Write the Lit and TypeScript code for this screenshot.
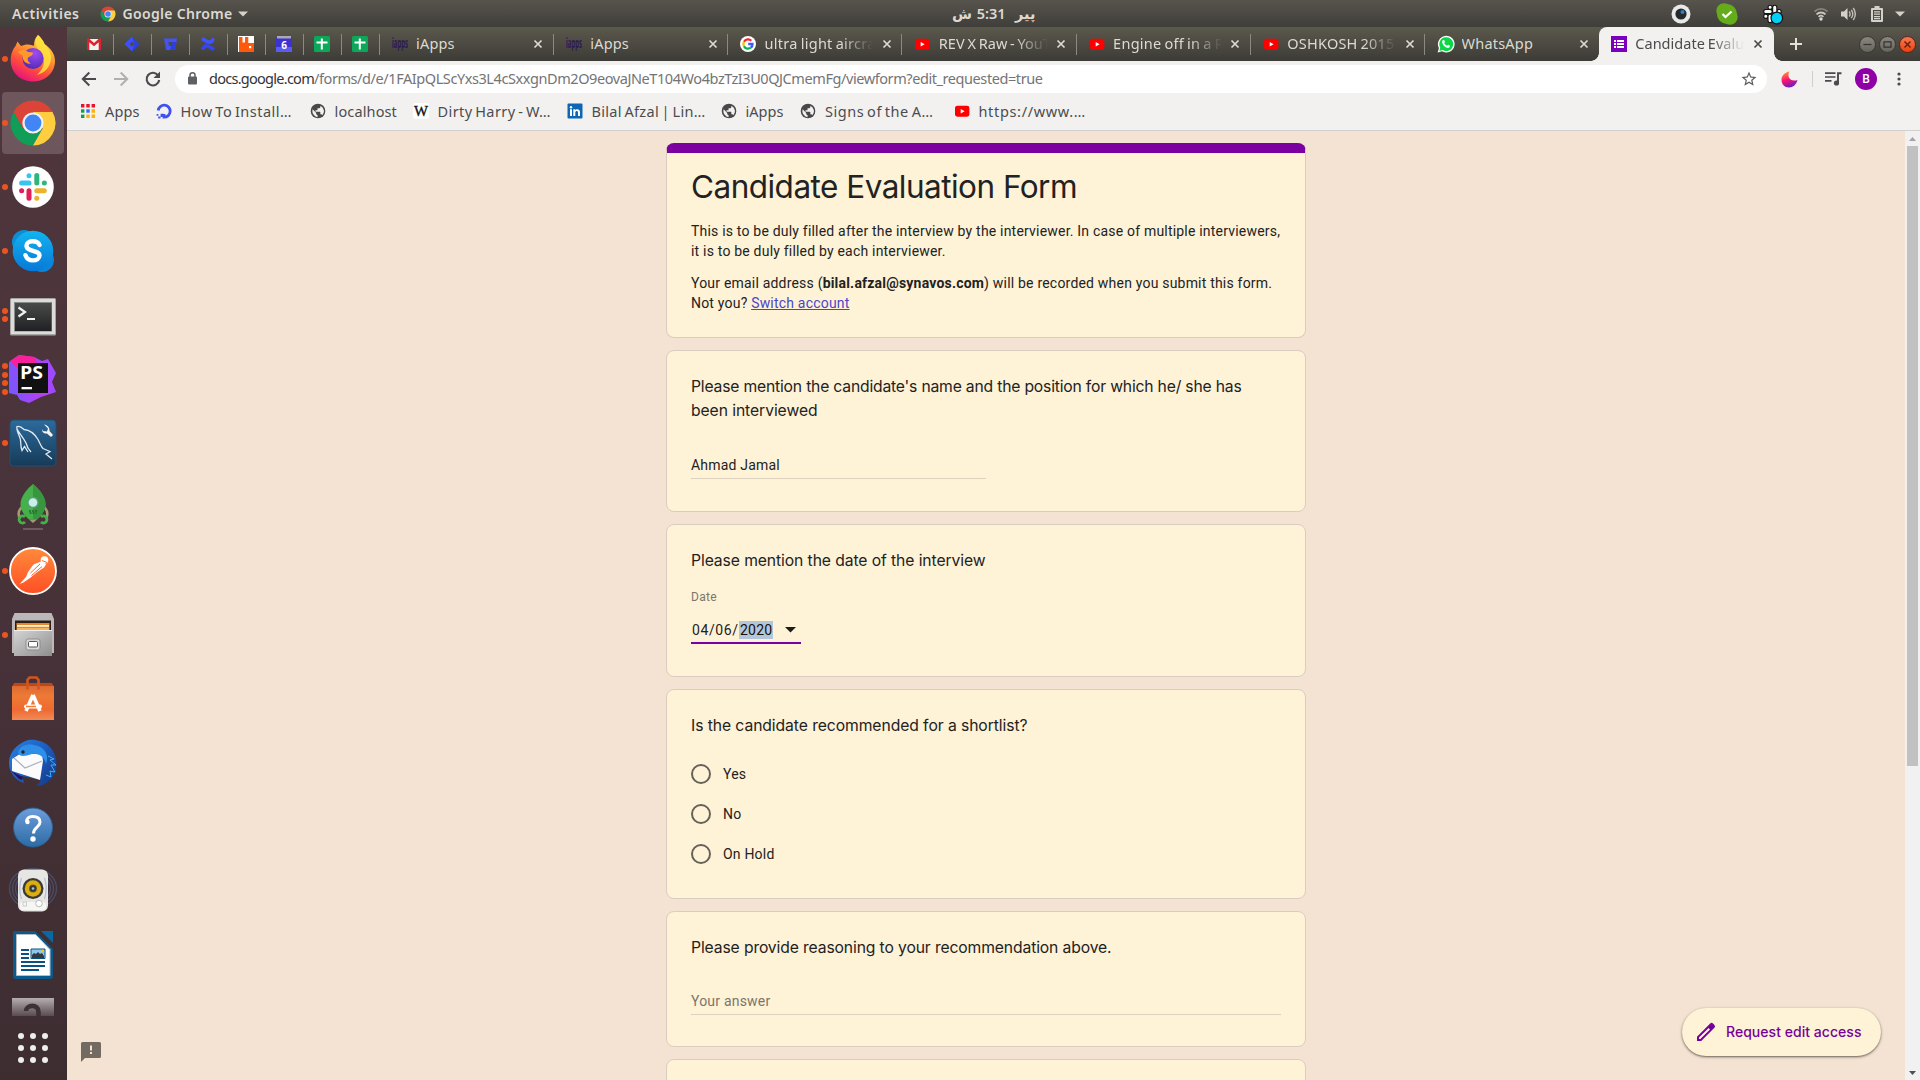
import { LitElement, html, svg, css, TemplateResult } from "lit";
import { customElement, property } from "lit/decorators.js";

/** A single line of text spread over a fixed advance width. */
@customElement("fit-text")
export class FitText extends LitElement {
  @property() text = "";
  @property({ type: Number }) w = 0;
  static styles = css`
    :host { display: block; white-space: pre; flex: none; }
    span { display: inline-block; }
  `;
  updated() {
    const el = this.renderRoot.querySelector("span") as HTMLElement;
    el.style.letterSpacing = "0px";
    const natural = el.getBoundingClientRect().width;
    const n = [...this.text].length;
    if (this.w > 0 && n > 0) el.style.letterSpacing = `${(this.w - natural) / n}px`;
  }
  render() {
    return html`<span>${this.text}</span>`;
  }
}

const fit = (text: string, w: number) => html`<fit-text .text=${text} .w=${w}></fit-text>`;
const icon = (size: number, vb: string, body: TemplateResult, h = size) =>
  html`<svg width=${size} height=${h} viewBox=${vb}>${body}</svg>`;

/* ---------- small icons ---------- */
const chromeArt = svg`
  <path d="M4.600 12.800A22.400 22.400 0 0 0 24 46.400L33.700 29.600 14.300 29.600Z" fill="#0f9d58"/>
  <path d="M43.400 12.800A22.400 22.400 0 0 1 24 46.400L33.700 29.600 24 12.800Z" fill="#ffcd40"/>
  <path d="M4.600 12.800A22.400 22.400 0 0 1 43.400 12.800H24L14.300 29.600Z" fill="#db4437"/>
  <circle cx="24" cy="24" r="10.600" fill="#f1f1f1"/><circle cx="24" cy="24" r="8.400" fill="#4285f4"/>`;
const close = html`<svg class="close" width="10" height="10" viewBox="0 0 10 10"><path d="M1.500 1.500 8.500 8.500M8.500 1.500 1.500 8.500" stroke="currentColor" stroke-width="1.700"/></svg>`;
const gmail = icon(16, "0 0 16 16", svg`<path d="M1 3h14v11H1z" fill="#f2f2f2"/><path d="M1 2.600h2L8 7l5-4.400h2V14h-2.300V6.200L8 10.200 3.300 6.200V14H1z" fill="#e0202c"/>`);
const jira = icon(16, "0 0 16 16", svg`<path d="M8 .5 15.500 8 8 15.500.5 8z" fill="#3c50ff"/><path d="M8 .5 15.500 8 8 15.500 10.500 8z" fill="#2733cc" opacity=".6"/><path d="M8 5.500 10.500 8 8 10.500 5.500 8z" fill="#4c4b43"/>`);
const bitbucket = icon(16, "0 0 16 16", svg`<path d="M2 2.500h13l-1.900 11.500H4.100z" fill="#4254f5"/><path d="M6.300 6h4.200L9.900 10H7z" fill="#4c4b43"/><path d="M10.500 6h3.900l-1.300 8H8z" fill="#2836d6" opacity=".7"/>`);
const confluence = icon(16, "0 0 16 16", svg`<path d="M1 4 3 1c3 1.500 4 3 6 3.200 1.500.1 2.500-1.300 3.500-2.700L15 3.200C13.500 6.500 12 8 9.500 8 6 8 4 5.500 1 4z" fill="#4254f5"/><path d="M15 12 13 15c-3-1.500-4-3-6-3.200-1.500-.1-2.500 1.300-3.500 2.700L1 12.800C2.500 9.500 4 8 6.500 8 10 8 12 10.500 15 12z" fill="#3446f2"/>`);
const rabbit = icon(16, "0 0 16 16", svg`<path d="M0 0h16v16H0z" fill="#fff"/><path d="M1 1h3.500v5.500H7V1h3.300v6H16v9H1z" fill="#ff5a0c"/><path d="M11 10h2.200v2.200H11z" fill="#fff"/>`);
const cal = icon(16, "0 0 16 16", svg`<path d="M0 1h16v15H0z" fill="#3d31d0"/><path d="M0 11h16v5H0z" fill="#5a5cf2"/><path d="M1 0h14v2.500H1z" fill="#a9a8b4"/><text x="8" y="13" text-anchor="middle" font-size="10" font-weight="700" font-family="Noto Sans,sans-serif" fill="#fff">6</text>`);
const sheets = icon(16, "0 0 16 16", svg`<rect width="16" height="16" rx="1.500" fill="#0aa858"/><path d="M6.800 2.500h2V13.500h-2zM2.500 5.500h11v2h-11z" fill="#fff"/>`);
const iapps = html`<svg width="16" height="16" viewBox="0 0 16 16"><text x="0" y="11.500" textLength="16" lengthAdjust="spacingAndGlyphs" font-size="14" font-weight="700" font-family="Noto Sans,sans-serif" fill="#2b1a55">iapps</text></svg>`;
const google = icon(16, "0 0 16 16", svg`<circle cx="8" cy="8" r="8" fill="#fff"/><g fill="none" stroke-width="2.300"><path d="M11.300 4.800A4.600 4.600 0 0 0 4 5.800" stroke="#ff1f2d"/><path d="M4 5.800a4.600 4.600 0 0 0 0 4.400" stroke="#ffbb00"/><path d="M4 10.200a4.600 4.600 0 0 0 6.800 1.500" stroke="#00b84a"/><path d="M10.800 11.700A4.400 4.400 0 0 0 12.500 8H8.200" stroke="#3b5bff"/></g>`);
const youtube = icon(16, "0 0 16 16", svg`<rect x="1" y="2.700" width="14.400" height="11" rx="2.400" fill="#f00"/><path d="M6.700 6 10.600 8.200 6.700 10.400z" fill="#fff"/>`);
const whatsapp = icon(18, "0 0 16 16", svg`<path d="M.6 15.600 1.700 11.600A7.400 7.400 0 1 1 4.500 14.500z" fill="#fff"/><path d="M2 14.200 2.900 11.300A6.200 6.200 0 1 1 5 13.400z" fill="#0bd648"/><path d="M5.300 4.500 6.400 4.400 7.100 6.200 6.400 7.100C7 8.300 7.800 9 9 9.500L9.800 8.700 11.500 9.600C11.500 11 10.500 11.600 9.600 11.500 7 11.100 4.900 8.900 4.600 6.700 4.500 5.800 4.800 5 5.300 4.500z" fill="#fff"/>`);
const forms = icon(16, "0 0 16 16", svg`<rect width="16" height="16" fill="#7a00bd"/><path d="M3 4h2v2H3zM3 7h2v2H3zM3 10h2v2H3zM6 4h7v2H6zM6 7h7v2H6zM6 10h7v2H6z" fill="#fff"/>`);
const apps = icon(14, "0 0 14 14", svg`<path d="M0 0h3.400v3.400H0zM5.300 0h3.400v3.400H5.300zM10.600 0H14v3.400h-3.400z" fill="#e8132b"/><path d="M0 5.300h3.400v3.400H0z" fill="#0aa050"/><path d="M5.300 5.300h3.400v3.400H5.300z" fill="#3b69f5"/><path d="M10.600 5.300H14v3.400h-3.400zM5.300 10.600h3.400V14H5.300zM10.600 10.600H14V14h-3.400z" fill="#fbb20a"/><path d="M0 10.600h3.400V14H0z" fill="#0aa050"/>`);
const ocean = icon(16, "0 0 16 16", svg`<path d="M2.200 7.500A6 6 0 1 1 8 14.200V11" fill="none" stroke="#3f51f5" stroke-width="2.800"/><path d="M4.600 10.800h3V14h-3zM2.200 13.500h2.300v2H2.200zM.6 11h1.800v1.800H.6z" fill="#3f51f5"/>`);
const globe = icon(16, "0 0 24 24", svg`<circle cx="12" cy="12" r="11" fill="#48484a"/><path d="M4 9.500 9.300 15v1.200A2 2 0 0 0 11.300 18v3.300A9.300 9.300 0 0 1 4 9.500zM18.500 18.300A2 2 0 0 0 16.500 17h-1v-3a1 1 0 0 0-1-1H8.300v-2h2a1 1 0 0 0 1-1V8h2.200a2 2 0 0 0 2-2V4a9 9 0 0 1 3 14.300z" fill="#f2f1f0"/>`);
const wiki = icon(16, "0 0 16 16", svg`<rect width="16" height="16" rx="3" fill="#fff"/><text x="1" y="12.800" font-size="14" font-weight="400" font-family="Liberation Serif,serif" textLength="14" lengthAdjust="spacingAndGlyphs" fill="#111" stroke="#111" stroke-width=".35">W</text>`);
const linkedin = icon(16, "0 0 16 16", svg`<rect x=".5" y=".5" width="15" height="15" rx="1" fill="#0b66b5"/><path d="M3 6.300h2V13H3zM6.300 6.300h2v1c1-1.700 4.700-1.600 4.700 1.700v4h-2V9.600c0-2.300-2.700-2-2.700 0V13h-2z" fill="#fff"/><circle cx="4" cy="4.200" r="1.200" fill="#fff"/>`);

/* ---------- dock icons ---------- */
const dockChrome = icon(48, "0 0 48 48", chromeArt);
const firefox = icon(48, "0 0 48 48", svg`
  <defs><linearGradient id="fa" x1=".8" y1="0" x2=".3" y2="1"><stop offset="0" stop-color="#fff44f"/><stop offset=".35" stop-color="#ffa02e"/><stop offset=".7" stop-color="#ff4a3e"/><stop offset="1" stop-color="#e5107f"/></linearGradient>
  <radialGradient id="fb" cx=".6" cy=".25" r=".8"><stop offset="0" stop-color="#a24bf5"/><stop offset="1" stop-color="#4b2cb0"/></radialGradient></defs>
  <path d="M29 0c3 3 5 5 6.500 9C41 13 46 18 46 26 46 38 36 46.500 24 46.500 11 46.500 1.700 37 1.700 25.500 1.700 19 4 14 6.500 11l2-4.500L12 11l5-1.500c4-.5 6 1 8 1C25 6 26 3 29 0z" fill="url(#fa)"/>
  <path d="M29 0c3 3 5 5 6.500 9 4 4 7 9 6.500 15C41 33 35 38 28 40 38 31 36 19 31 16 26 12 25 6 29 0z" fill="#ffe340" opacity=".85"/>
  <circle cx="24" cy="23.500" r="10.500" fill="url(#fb)"/>
  <path d="M9 17c4-3 8-2 10 0l5 .5c0 3-3 4-5 5-1 3 1 5 3 6-6 1-9-4-8-8-2-1-4-2-5-3.500z" fill="#ff9a26"/>`);
const slackMarks = svg`<g fill="none" stroke-width="5" stroke-linecap="round">
  <path d="M20 12.700v.1" stroke="#36c5f0"/><path d="M12.600 20H20" stroke="#36c5f0"/>
  <path d="M27.800 12.600V20" stroke="#2eb67d"/><path d="M35.300 20h.1" stroke="#2eb67d"/>
  <path d="M27.800 27.700h7.500" stroke="#ecb22e"/><path d="M27.800 35.200v.1" stroke="#ecb22e"/>
  <path d="M20 27.700v7.500" stroke="#e01e5a"/><path d="M12.600 27.700h.1" stroke="#e01e5a"/></g>`;
const slack = icon(48, "0 0 48 48", svg`<circle cx="24" cy="24" r="20.800" fill="#fff"/>${slackMarks}`);
const skype = icon(48, "0 0 48 48", svg`<defs><linearGradient id="sk" x2="0" y2="1"><stop offset="0" stop-color="#12b4f0"/><stop offset="1" stop-color="#0878d8"/></linearGradient></defs>
  <circle cx="15" cy="15" r="12" fill="#0a8fd6"/><circle cx="33" cy="33" r="12" fill="#0b84dc"/><circle cx="24" cy="24" r="20.300" fill="url(#sk)"/>
  <path d="M30.500 18C29 14.500 25.500 14.300 23.500 14.300c-4 0-6 2-6 4.500 0 6.500 13 3.500 13 9.800 0 3-3 4.800-6.500 4.800-4 0-6.300-1.700-7.500-5.200" fill="none" stroke="#fff" stroke-width="4.400" stroke-linecap="round"/>`);
const terminal = icon(48, "0 0 48 48", svg`<defs><linearGradient id="tm" x2="0" y2="1"><stop offset="0" stop-color="#4a4a4a"/><stop offset="1" stop-color="#1f2122"/></linearGradient></defs>
  <rect x="1" y="7" width="46" height="37.500" rx="1.500" fill="#a5a5a3"/><rect x="2" y="8" width="44" height="35" fill="#dcdcda"/><rect x="5" y="11" width="38" height="29.500" fill="#8a8a88"/><rect x="6" y="12" width="36.500" height="28" fill="url(#tm)"/>
  <path d="M9.500 16.500 16 21 9.500 25.500" fill="none" stroke="#f0f0f0" stroke-width="2.200"/><path d="M18 28h8" stroke="#f0f0f0" stroke-width="2"/>`);
const phpstorm = icon(48, "0 0 48 48", svg`<defs><linearGradient id="ps" x1="0" x2="1" y1=".6" y2=".4"><stop offset="0" stop-color="#7a56ff"/><stop offset=".6" stop-color="#b340f5"/><stop offset="1" stop-color="#9a4bff"/></linearGradient></defs>
  <path d="M0 7 10 0l15 2 8 4 6-2 8 14-4 9 4 10-15 5-12 6-9-3-3-5-8-2z" fill="url(#ps)"/><path d="M1 6 10 0l16 2 2 7-20 4z" fill="#f7229b"/>
  <path d="M9 8h30v30H9z" fill="#111"/><path d="M12.500 32H23v2.300H12.500z" fill="#fff"/>
  <text x="11" y="24" textLength="23" lengthAdjust="spacingAndGlyphs" font-size="17.500" font-weight="700" font-family="Open Sans,sans-serif" fill="#fff">PS</text>`);
const mysql = icon(48, "0 0 48 48", svg`<defs><linearGradient id="my" x2="0" y2="1"><stop offset="0" stop-color="#2d6a9c"/><stop offset="1" stop-color="#163b58"/></linearGradient></defs>
  <rect x="1" y="1" width="46" height="46" rx="3.500" fill="url(#my)" stroke="#20506f"/>
  <path d="M19 33 15.500 27.500l-2.500 4C11 27 12.500 23 11 19 9 14 7 10 8 7.500c3-1 5 1 7 3 6 .5 11 5 14 10 2 4 3 7 5 9l7 3-4 2.500 6 5M8 10c2 4 6 8 9 14 1 4 3 7 5 9" fill="none" stroke="#dfeaf2" stroke-width="1.300"/>
  <path d="M35 5.500 39 9.500l-1 3-4-.5-1-2c0 4 3 5 5 4.500l4 3.500 2-2-3.500-4c.5-3-2-6-5.500-6.500z" fill="#f4f4f4"/>`);
const rocket = icon(48, "0 0 48 48", svg`<path d="M14 23c-5 4-5 9-3 13M34 23c5 4 5 9 3 13" fill="none" stroke="#a39b74" stroke-width="2.500"/>
  <path d="M24 1C30 6 37 14 36.500 22 36 29 31 34 28 36.500H20C17 34 12 29 11.500 22 11 14 18 6 24 1z" fill="#46b04b"/><path d="M24 1C30 6 37 14 36.500 22 36 29 31 34 28 36.500H24z" fill="#38963f"/>
  <path d="M20 36.500h8L24 40z" fill="#a39b74"/><circle cx="24" cy="19.500" r="5" fill="#c9f0e6" stroke="#5f9a86" stroke-width="1.300"/><path d="M20 28h8M20.500 30h7" stroke="#226a2c" stroke-width="1.500" stroke-dasharray="2 1"/>
  <path d="M16 34a3.500 3.500 0 1 0 0 5M32 34a3.500 3.500 0 1 1 0 5" fill="none" stroke="#46b04b" stroke-width="2.800"/><path d="M14 46h20" stroke="#77696c" stroke-width="1.500"/>`);
const postman = icon(48, "0 0 48 48", svg`<defs><linearGradient id="pm" x2="0" y2="1"><stop offset="0" stop-color="#ff8a3c"/><stop offset="1" stop-color="#ff4f24"/></linearGradient></defs>
  <circle cx="24" cy="24" r="23" fill="url(#pm)" stroke="#fff" stroke-width="1.800"/><circle cx="35.500" cy="13" r="3.800" fill="#fff"/>
  <path d="M32 14.500 24.500 17.500 19 25l-2 5L10.500 37l4-1.500L21 31l8-6.500 6-4 2-3z" fill="#fff"/><path d="M31 17 21.500 26M33 19.500 22.500 28.500M33 13.500l5 2" stroke="#ff6a30" stroke-width="1"/>`);
const files = icon(48, "0 0 48 48", svg`<defs><linearGradient id="fi" x2="1" y2="1"><stop offset="0" stop-color="#d5d5d5"/><stop offset="1" stop-color="#8e8e8e"/></linearGradient></defs>
  <path d="M5.500 2h37l2.500 6v34H3V8z" fill="#bcb8ba"/><path d="M6 9.500h36V20H6z" fill="#2b1f18"/><path d="M7.500 12h33v8h-33z" fill="#e8862a"/><path d="M8 14h32v1.800H8z" fill="#fff3d8"/><path d="M8 17h32v2H8z" fill="#f5b35e"/>
  <path d="M5 19h38v26H5z" fill="url(#fi)"/><path d="M5 19h38v1H5z" fill="#f0f0f0"/><rect x="17" y="28" width="14" height="11" rx="2" fill="#d8d8d8" stroke="#8d8d8d"/><rect x="19.500" y="30.500" width="9" height="5.500" rx="1" fill="#fff" stroke="#555"/>`);
const software = icon(48, "0 0 48 48", svg`<defs><linearGradient id="so" x2="0" y2="1"><stop offset="0" stop-color="#dd6a34"/><stop offset=".3" stop-color="#ee7a35"/><stop offset=".7" stop-color="#ef6a30"/><stop offset="1" stop-color="#f08b58"/></linearGradient></defs>
  <path d="M5 8h38l2 4H3z" fill="#b84918"/><path d="M3 11h42v34H3z" fill="url(#so)"/><path d="M18.500 14.500V5l2-2.500h7l2 2.500v9.500" fill="none" stroke="#d2551f" stroke-width="2.600"/>
  <path d="M24 20 17 36M24 20 31 36" stroke="#fff" stroke-width="3.600"/><rect x="15" y="29.500" width="18" height="4" rx="2" fill="#fff"/><path d="M17 31.500h10" stroke="#f08030" stroke-width="1.500"/>`);
const thunderbird = icon(50, "0 0 50 50", svg`<defs><linearGradient id="tb" x1="0" x2="1" y2=".8"><stop offset="0" stop-color="#2a7fdc"/><stop offset=".5" stop-color="#1d62c4"/><stop offset="1" stop-color="#163b8e"/></linearGradient></defs>
  <path d="M20 2C34 0 48 9 48.500 25 49 38 40 47.500 29 48L33 42 14 38 16 45C7 42 1 34 1 25 1 15 8 6 20 2z" fill="url(#tb)"/>
  <path d="M4 21 12 16h22l1 7-3 19L4 33z" fill="#fbfbfd"/><path d="M6 20l11 10L34 23" fill="none" stroke="#aeb0bb" stroke-width="1.200"/>
  <path d="M10 14c3-8 12-9 20-6 8 3 11 10 8 18-1-5-4-9-10-10-5-1-6 2-13 2-3 0-5-2-5-4z" fill="#2f8fe8"/><circle cx="15" cy="14" r="1.700" fill="#222"/><path d="M3 33l12 6-1 3-3-1z" fill="#28145e"/>
  <path d="M40 18l6 3-4 1 6 5-5 0 4 7-5-1 1 6-5-2" fill="none" stroke="#3fb0ef" stroke-width="1"/>`);
const help = icon(48, "0 0 48 48", svg`<defs><linearGradient id="he" x2="0" y2="1"><stop offset="0" stop-color="#6d9edb"/><stop offset="1" stop-color="#2c6ba5"/></linearGradient></defs>
  <circle cx="24" cy="24.500" r="19.500" fill="url(#he)" stroke="#2a5f92"/><path d="M17.500 19c0-3.500 2.500-5.500 6-5.500 4.500 0 7.500 2 7.500 5.800 0 5-6.500 5-6.500 11.200" fill="none" stroke="#fff" stroke-width="3"/><circle cx="18.500" cy="19" r="2.200" fill="#fff"/><circle cx="24" cy="36" r="2.700" fill="#fff"/>`);
const speaker = icon(50, "0 0 50 50", svg`<g fill="none" stroke="#4d5878" stroke-width="1.300" opacity=".75"><ellipse cx="25" cy="22.500" rx="23.500" ry="20"/><ellipse cx="25" cy="22.500" rx="20.500" ry="17.500"/><ellipse cx="25" cy="22.500" rx="17.500" ry="15"/></g>
  <rect x="10" y="3.500" width="30" height="42" rx="6" fill="#e6e6e3"/><rect x="12" y="36" width="26" height="8" rx="3" fill="#f6f6f4"/><path d="M13.500 12q-3.500 10 0 21M36.500 12q3.500 10 0 21" fill="none" stroke="#b4bfd8" stroke-width="1.200"/><circle cx="25" cy="22.500" r="10.500" fill="#3a3a38"/><circle cx="25" cy="22.500" r="8.200" fill="#dcae12"/><circle cx="25" cy="22.500" r="4" fill="#7b6416"/><circle cx="25" cy="22.500" r="3.200" fill="#2f3a40"/><circle cx="25" cy="22.500" r="1.300" fill="#b9c3ca"/><circle cx="31" cy="37.500" r="3.300" fill="#fff" stroke="#bbb"/><rect x="15" y="36" width="3.500" height="4" fill="none" stroke="#ccc"/>`);
const writer = icon(48, "0 0 48 48", svg`<path d="M6 0h20l18 18v27a3 3 0 0 1-3 3H7a3 3 0 0 1-3-3V2a2 2 0 0 1 2-2z" fill="#0a5a8e"/><path d="M32 0h12v12z" fill="#0869a3"/><path d="M7.500 3.500h19L41 18.500V44.500H7.500z" fill="#fff" stroke="#b9bcc0"/>
  <path d="M12 19h8M12 23h8M12 27h8M12 31h24M12 35h24M12 39h18" stroke="#0a5282" stroke-width="2"/><path d="M22 18h14v9.500H22z" fill="#8fc6ec" stroke="#0a5282"/><path d="M23 27v-3l2-2 2 1 2-2 2 2 2-1 2 3v2z" fill="#2f3b40"/><circle cx="33.500" cy="20" r="1.300" fill="#f5c518"/>`);
const amazon = icon(48, "0 0 48 48", svg`<defs><linearGradient id="am" x2="0" y2="1"><stop offset="0" stop-color="#b5aeb1"/><stop offset=".42" stop-color="#5c4d51"/><stop offset="1" stop-color="#4a3a3e"/></linearGradient></defs>
  <path d="M3 3h42v42H3z" fill="url(#am)"/><path d="M17 16c0-6.500 12.500-7.500 12.500 1v8" fill="none" stroke="#3c3235" stroke-width="4.600"/>`);

const dock: [TemplateResult, number][] = [
  [firefox, 1], [dockChrome, 1], [slack, 1], [skype, 1], [terminal, 2], [phpstorm, 4], [mysql, 1], [rocket, 0],
  [postman, 1], [files, 1], [software, 0], [thunderbird, 0], [help, 0], [speaker, 0], [writer, 0], [amazon, 0],
];
const pinned = [gmail, jira, bitbucket, confluence, rabbit, cal, sheets, sheets];
const tabs: [TemplateResult, string, number, boolean][] = [
  [iapps, "iApps", 38.500, false], [iapps, "iApps", 38.500, false], [google, "ultra light aircra", 111, true],
  [youtube, "REV X Raw - YouT", 112, true], [youtube, "Engine off in a R", 111, true],
  [youtube, "OSHKOSH 2015 -", 115, true], [whatsapp, "WhatsApp", 71.500, false],
];
const marks: [TemplateResult, string, number, number][] = [
  [apps, "Apps", 34.500, 75.500], [ocean, "How To Install…", 111.500, 154], [globe, "localhost", 62.500, 103],
  [wiki, "Dirty Harry - W…", 113.500, 154], [linkedin, "Bilal Afzal | Lin…", 114, 154], [globe, "iApps", 38, 79.500],
  [globe, "Signs of the A…", 108.500, 153.500], [youtube, "https://www.…", 107.500, 140],
];

@customElement("app-root")
export class AppRoot extends LitElement {
  static styles = css`
    :host { display: block; width: 1920px; height: 1080px; overflow: hidden; font-family: "Noto Sans", sans-serif; }
    * { box-sizing: border-box; }
    svg { display: block; flex: none; }
    .desktop { display: grid; grid-template: 27px 1053px / 67px 1853px; width: 1920px; height: 1080px; }
    .panel { grid-column: 1 / 3; display: grid; grid-template-columns: 1fr auto 1fr; align-items: center; background: linear-gradient(#57544d, #403e3a); color: #dcd9d3; font-size: 14px; font-weight: 600; line-height: 26px; }
    .pl { display: flex; align-items: center; padding-left: 12px; }
    .pl svg:first-of-type { margin-left: 20px; margin-right: 7px; }
    .pl svg:last-of-type { margin-left: 5px; }
    .clock { direction: rtl; width: 84px; margin-left: 67px; padding-bottom: 2px; white-space: pre; font-family: "Noto Sans", "DejaVu Sans", sans-serif; font-size: 14.500px; line-height: 24px; word-spacing: 1px; }
    .pr { display: flex; align-items: center; justify-content: flex-end; padding-right: 15px; }
    .wifi { margin-left: 30px; } .vol { margin-left: 13px; } .bat { margin-left: 15px; } .arr { margin-left: 12px; } .sky { margin-left: 25px; } .slk { margin-left: 24px; }

    .dock { background: linear-gradient(#50363c, #49333a 45%, #3d2d31); display: flex; flex-direction: column; }
    .items { height: 989px; overflow: hidden; display: flex; flex-direction: column; }
    .cell { height: 64px; flex: none; display: grid; grid-template-columns: 8px 50px; align-items: center; }
    .cell > svg { justify-self: center; }
    .active { margin: 1px 3px 1px 2px; height: 62px; border-radius: 4px; background: #6e575c; grid-template-columns: 6px 50px; }
    .active .run { margin-left: 0; }
    .run { display: flex; flex-direction: column; align-items: center; gap: 2.500px; width: 6px; margin-left: 2px; }
    .run i { width: 6px; height: 6px; border-radius: 50%; background: #e95420; }
    .launcher { display: grid; grid-template-columns: repeat(3, 6px); gap: 6px; margin: 17px 0 0 18px; }
    .launcher i { width: 6px; height: 6px; border-radius: 50%; background: #eee; }

    .browser { display: grid; grid-template-rows: 34px 38px 32px 949px; }
    .strip { display: flex; align-items: stretch; background: linear-gradient(#5b594c, #3d3b37); padding-left: 8.500px; color: #dcdad2; font-size: 14.500px; line-height: 30px; word-spacing: -1px; }
    .pin { width: 38px; display: flex; align-items: center; justify-content: center; }
    .pin svg { margin-right: 1px; }
    .pin, .tab { background: linear-gradient(#8b8980, #8b8980) right 7px / 1px 21px no-repeat; padding-bottom: 1px; }
    .tab { width: 174.250px; display: flex; align-items: center; padding: 0 10.300px 1px 12px; gap: 8.600px; }
    .tab .ic { width: 16px; display: grid; place-items: center; }
    .label { width: 109px; overflow: hidden; padding-bottom: 1px; }
    .fade { -webkit-mask-image: linear-gradient(90deg, #000 70%, transparent 100%); mask-image: linear-gradient(90deg, #000 70%, transparent 100%); }
    .close { margin-left: auto; }
    .last { background: none; }
    .current { width: 175px; background: #f2f1f0; color: #4a4a4c; border-radius: 8px 8px 0 0; padding-right: 11px; gap: 8px; }
    .before, .after { width: 8px; background: #f2f1f0; align-self: flex-end; height: 8px; }
    .before { margin-left: -8px; -webkit-mask: radial-gradient(circle at 0 0, transparent 7.500px, #000 8px); mask: radial-gradient(circle at 0 0, transparent 7.500px, #000 8px); }
    .after { -webkit-mask: radial-gradient(circle at 100% 0, transparent 7.500px, #000 8px); mask: radial-gradient(circle at 100% 0, transparent 7.500px, #000 8px); }
    .plus { margin: 11px 0 0 8px; }
    .wm { margin: 0 4px 0 auto; display: flex; align-items: center; gap: 3px; }

    .toolbar { background: #f2f1f0; display: flex; align-items: center; padding: 0 12px 2px 13px; }
    .nav { display: flex; gap: 14px; width: 95px; }
    .omni { width: 1592px; height: 28px; border-radius: 14px; background: #fff; display: flex; align-items: center; padding: 0 9px 1px 12px; color: #747476; font-size: 14.500px; line-height: 26px; }
    .omni fit-text { padding-bottom: 1px; }
    .omni .lock { margin-right: 11px; }
    .omni .host { color: #343436; }
    .omni .star { margin-left: auto; }
    .tools { display: flex; align-items: center; margin-left: 14px; flex: 1; }
    .divider { width: 1px; height: 16px; background: #cfcecc; margin: 0 12px 0 14px; }
    .avatar { width: 22px; height: 22px; border-radius: 50%; background: #8e00a6; color: #fff; font: 500 12px/22px Roboto, sans-serif; text-align: center; margin: 0 20px 0 13px; }

    .marks { background: #f2f1f0; border-bottom: 1px solid #cfd0d0; display: flex; padding: 0 0 7px 13px; color: #4c4c4e; font-size: 14.500px; line-height: 22px; word-spacing: -1.500px; }
    .mark { display: flex; align-items: center; gap: 9px; flex: none; white-space: nowrap; }
    .mark fit-text { padding-bottom: 1px; }
    .mark .ic { width: 16px; display: grid; place-items: center; }

    .view { display: grid; grid-template-columns: 1838px 15px; }
    .page { background: #f4e3d3; overflow: hidden; position: relative; font: 14px/20px Roboto, sans-serif; letter-spacing: .2px; color: #222; padding-top: 12px; }
    .form { width: 640px; margin-left: 599px; display: flex; flex-direction: column; gap: 12px; }
    .card { background: #fef2d7; border: 1px solid #dacdbf; border-radius: 8px; padding: 0 24px; overflow: hidden; flex: none; }
    .head { height: 195px; border-top: 10px solid #7a009f; padding-top: 14px; }
    .title { font-family: Inter, sans-serif; font-size: 31.500px; line-height: 40px; letter-spacing: 0; }
    .desc { margin: 14px 0 0; }
    .mail { margin: 12px 0 0; }
    .mail b { font-weight: 700; }
    .mail a { color: #4b45c8; text-decoration: underline; }
    .q { padding-top: 24px; font-family: Inter, sans-serif; font-size: 15.700px; line-height: 24px; letter-spacing: 0; }
    .name { height: 162px; } .date { height: 153px; } .short { height: 210px; } .reason { height: 136px; } .next { height: 80px; }
    .input { border-bottom: 1px solid #ddd2bd; height: 24px; margin-top: 32px; }
    .half { width: 295px; }
    .reason .input { margin-top: 31px; }
    .grey { color: #7b766b; }
    .small { font-size: 12px; line-height: 16px; margin-top: 16px; letter-spacing: .3px; }
    .picker { display: flex; align-items: center; width: 110px; height: 24px; border-bottom: 2px solid #7a009f; margin-top: 15px; padding: 0 0 2px 1px; }
    .picker .d { letter-spacing: .6px; width: 47px; }
    .picker .sel { background: #b4c6d9; height: 18px; line-height: 18px; width: 34px; padding-left: 1px; color: #111; }
    .picker svg { margin-left: 12px; }
    .opts { display: grid; gap: 20px; margin-top: 26px; }
    .opt { display: flex; align-items: center; gap: 12px; height: 20px; }
    .opt i { width: 20px; height: 20px; border: 2px solid #666258; border-radius: 50%; }
    .fab { position: absolute; left: 1615px; top: 877px; width: 199px; height: 48px; border-radius: 24px; background: #fef2d7; box-shadow: 0 1px 2px rgba(60, 50, 40, .65), 0 1px 3px 1px rgba(60, 50, 40, .12); display: flex; align-items: center; padding: 0 0 1px 12px; gap: 8px; color: #75009b; font: 500 14px/20px Inter, sans-serif; letter-spacing: 0; }
    .report { position: absolute; left: 14px; top: 911px; }
    .bar { background: #f1f1f1; display: flex; flex-direction: column; align-items: center; padding-top: 6px; }
    .thumb { width: 11px; height: 620px; background: #c1c1c1; margin-top: 5px; }
    .down { margin-top: auto; margin-bottom: 5px; }
  `;

  render() {
    return html`<div class="desktop">${this.panel()}${this.dock()}
      <main class="browser">${this.strip()}${this.toolbar()}
        <div class="marks">${marks.map(([i, t, w, cell]) => html`<div class="mark" style="width:${cell}px"><span class="ic">${i}</span>${fit(t, w)}</div>`)}</div>
        ${this.view()}
      </main></div>`;
  }

  panel() {
    return html`<header class="panel">
      <div class="pl">${fit("Activities", 67.500)}${icon(16, "0 0 48 48", chromeArt)}${fit("Google Chrome", 110)}
        ${icon(10, "0 0 10 6", svg`<path d="M0 .5h10L5 5.500z" fill="#d4d1cb"/>`, 6)}</div>
      <div class="clock">پیر  5:31 ش</div>
      <div class="pr">
        ${icon(20, "0 0 20 20", svg`<circle cx="10" cy="10" r="9.500" fill="#e9e9e9"/><circle cx="10" cy="10" r="5.600" fill="#26292c"/><circle cx="11.500" cy="8" r="2" fill="#2d7ec2"/>`)}
        <svg class="sky" width="22" height="22" viewBox="0 0 22 22"><circle cx="8" cy="8" r="7.700" fill="#65ac1c"/><circle cx="14" cy="14" r="7.700" fill="#65ac1c"/><circle cx="11" cy="11" r="10" fill="#65ac1c"/><path d="M6.500 11 9.500 14 15.500 8.500" fill="none" stroke="#fff" stroke-width="2.300"/></svg>
        <svg class="slk" width="22" height="22" viewBox="0 0 22 22"><g transform="translate(-3.500 -3) scale(.58)" fill="none" stroke-linecap="round"><path d="M20 12.500v.1M12.500 20H20M28 12.500V20M35.500 20h.1M28 28h7.500M28 35.500v.1M20 28v7.500M12.500 28h.1" stroke="#151515" stroke-width="9"/><path d="M20 12.500v.1M12.500 20H20M28 12.500V20M35.500 20h.1M28 28h7.500M28 35.500v.1M20 28v7.500M12.500 28h.1" stroke="#fff" stroke-width="5.200"/></g><circle cx="14.800" cy="15" r="5.800" fill="#00d0f8" stroke="#111" stroke-width="1.200"/></svg>
        <svg class="wifi" width="14" height="14" viewBox="0 0 14 14"><g fill="none" stroke="#c9c6c0" stroke-width="1.800"><path d="M.5 4.500a9.500 9.500 0 0 1 13 0" opacity=".45"/><path d="M2.500 7.300a6.500 6.500 0 0 1 9 0"/><path d="M4.600 9.800a3.500 3.500 0 0 1 4.800 0"/></g><circle cx="7" cy="12" r="1.700" fill="#dcd9d3"/></svg>
        <svg class="vol" width="15" height="14" viewBox="0 0 15 14"><path d="M0 4.500h3L6.500 1v12L3 9.500H0z" fill="#d4d1cb"/><path d="M8.300 4.500q1.600 2.500 0 5M10.300 2.800q3 4.200 0 8.400M12.300 1q4 6 0 12" fill="none" stroke="#c0bdb7" stroke-width="1.400"/></svg>
        <svg class="bat" width="12" height="16" viewBox="0 0 12 16"><path d="M3.500 0h5v2H11a1 1 0 0 1 1 1v12a1 1 0 0 1-1 1H1a1 1 0 0 1-1-1V3a1 1 0 0 1 1-1h2.500z" fill="#d4d1cb"/><path d="M2 4h8v10H2z" fill="#4b4943"/><path d="M3 5.800h6M3 8.200h6M3 10.600h6M3 12.700h6" stroke="#d4d1cb" stroke-width="1.200"/></svg>
        <svg class="arr" width="10" height="6" viewBox="0 0 10 6"><path d="M0 .5h10L5 5.500z" fill="#d4d1cb"/></svg>
      </div></header>`;
  }

  dock() {
    return html`<nav class="dock"><div class="items">${dock.map(([i, n], k) => html`<div class="cell ${k === 1 ? "active" : ""}"><span class="run">${Array.from({ length: n }, () => html`<i></i>`)}</span>${i}</div>`)}</div>
      <div class="launcher">${Array.from({ length: 9 }, () => html`<i></i>`)}</div></nav>`;
  }

  strip() {
    return html`<div class="strip">${pinned.map((p) => html`<div class="pin">${p}</div>`)}
      ${tabs.map(([i, t, w, f], k) => html`<div class="tab ${k === tabs.length - 1 ? "last" : ""}"><span class="ic">${i}</span><div class="label ${f ? "fade" : ""}">${fit(t, w)}</div>${close}</div>`)}
      <span class="before"></span>
      <div class="tab current"><span class="ic">${forms}</span><div class="label fade">${fit("Candidate Evalu", 109)}</div>${close}</div>
      <span class="after"></span>
      <svg class="plus" width="12" height="12" viewBox="0 0 12 12"><path d="M6 0v12M0 6h12" stroke="#e4e2d8" stroke-width="2"/></svg>
      <div class="wm">
        ${this.winButton("#8a8880", "#65635c", "#393732", svg`<path d="M4.500 8.500h8" stroke="#35332f" stroke-width="1.200"/>`)}
        ${this.winButton("#8a8880", "#65635c", "#393732", svg`<path d="M5 5.800h7v5.400H5z" fill="none" stroke="#35332f" stroke-width="1.200"/>`)}
        ${this.winButton("#f77b55", "#ea3f0c", "#5a2414", svg`<path d="M5.500 5.500l6 6M11.500 5.500l-6 6" stroke="#5c2010" stroke-width="1.400"/>`)}
      </div></div>`;
  }

  winButton(a: string, b: string, s: string, glyph: TemplateResult) {
    const id = "w" + a.slice(1);
    return html`<svg width="17" height="17" viewBox="0 0 17 17"><defs><linearGradient id=${id} x2="0" y2="1"><stop offset="0" stop-color=${a}></stop><stop offset="1" stop-color=${b}></stop></linearGradient></defs><circle cx="8.500" cy="8.500" r="8" fill="url(#${id})" stroke=${s}></circle>${glyph}</svg>`;
  }

  toolbar() {
    return html`<div class="toolbar">
      <div class="nav">
        ${icon(18, "0 0 18 18", svg`<path d="M16 9H3M9.300 2.500 2.800 9l6.500 6.500" fill="none" stroke="#4a4a4c" stroke-width="2"/>`)}
        ${icon(18, "0 0 18 18", svg`<path d="M2 9h13M8.700 2.500 15.200 9l-6.500 6.500" fill="none" stroke="#b0afad" stroke-width="2"/>`)}
        ${icon(18, "0 0 18 18", svg`<path d="M14.200 5.600A6.300 6.300 0 1 0 15.200 10" fill="none" stroke="#4a4a4c" stroke-width="2.100"/><path d="M16 1.500V8H9.500z" fill="#4a4a4c"/>`)}
      </div>
      <div class="omni">
        <svg class="lock" width="11" height="13" viewBox="0 0 11 13"><rect x="1" y="4.500" width="9" height="8" rx="1" fill="#5f6063"/><path d="M3 5V3.300a2.500 2.500 0 0 1 5 0V5" fill="none" stroke="#5f6063" stroke-width="1.500"/></svg>
        <span class="host">${fit("docs.google.com", 105)}</span>
        ${fit("/forms/d/e/1FAIpQLScYxs3L4cSxxgnDm2O9eovaJNeT104Wo4bzTzI3U0QJCmemFg/viewform?edit_requested=true", 728.500)}
        <svg class="star" width="18" height="18" viewBox="0 0 24 24"><path d="M22 9.200l-7.200-.6L12 2 9.200 8.600 2 9.200l5.500 4.700L5.800 21 12 17.300 18.200 21l-1.600-7.100zM12 15.400l-3.800 2.300 1-4.300-3.300-2.900 4.400-.4L12 6.100l1.700 4 4.400.4-3.300 2.900 1 4.300z" fill="#5c5c5e"/></svg>
      </div>
      <div class="tools">
        <svg width="17" height="17" viewBox="0 0 17 17"><defs><linearGradient id="mo" x1=".2" x2=".5" y2="1"><stop offset="0" stop-color="#ffa02e"/><stop offset=".5" stop-color="#ff1470"/><stop offset="1" stop-color="#6a1cc0"/></linearGradient></defs><path d="M8.500.5C5.500 5 9 11.500 16.500 9 15.500 13.500 12 16.500 8 16.500 3.500 16.500.5 13 .5 9 .5 4.500 4 1 8.500.5z" fill="url(#mo)"/></svg>
        <span class="divider"></span>
        <svg width="17" height="14" viewBox="0 0 17 14"><path d="M0 1.200h10.500M0 5h10.500M0 8.800h6.500" stroke="#4a4a4c" stroke-width="1.700"/><path d="M13 11.200V1.200h3.500" fill="none" stroke="#4a4a4c" stroke-width="1.900"/><circle cx="11.500" cy="11" r="2.600" fill="#4a4a4c"/></svg>
        <span class="avatar">B</span>
        <svg width="4" height="14" viewBox="0 0 4 14"><g fill="#4a4a4c"><circle cx="2" cy="2" r="1.600"/><circle cx="2" cy="7" r="1.600"/><circle cx="2" cy="12" r="1.600"/></g></svg>
      </div></div>`;
  }

  view() {
    return html`<div class="view"><div class="page">
      <div class="form">
        <section class="card head"><div class="title">${fit("Candidate Evaluation Form", 386)}</div>
          <div class="desc">This is to be duly filled after the interview by the interviewer. In case of multiple interviewers, it is to be duly filled by each interviewer.</div>
          <div class="mail">Your email address (<b>bilal.afzal@synavos.com</b>) will be recorded when you submit this form. Not you? <a>Switch account</a></div></section>
        <section class="card name"><div class="q">${fit("Please mention the candidate's name and the position for which he/ she has", 550.500)}${fit("been interviewed", 126.500)}</div>
          <div class="input half">Ahmad Jamal</div></section>
        <section class="card date"><div class="q">${fit("Please mention the date of the interview", 294.500)}</div>
          <div class="small grey">Date</div>
          <div class="picker"><span class="d">04/06/</span><span class="sel">2020</span>${icon(11, "0 0 11 6", svg`<path d="M0 0h11L5.500 5.500z" fill="#1c1c1c"/>`, 6)}</div></section>
        <section class="card short"><div class="q">${fit("Is the candidate recommended for a shortlist?", 336.500)}</div>
          <div class="opts">${["Yes", "No", "On Hold"].map((o) => html`<div class="opt"><i></i><span>${o}</span></div>`)}</div></section>
        <section class="card reason"><div class="q">${fit("Please provide reasoning to your recommendation above.", 420.500)}</div>
          <div class="input grey">Your answer</div></section>
        <section class="card next"></section>
      </div>
      <svg class="report" width="20" height="20" viewBox="0 0 20 20"><path d="M1.500 0h17A1.500 1.500 0 0 1 20 1.500v13A1.500 1.500 0 0 1 18.500 16H4L0 20V1.500A1.500 1.500 0 0 1 1.500 0z" fill="#736a61"/><path d="M9 3.500h2v5H9zM9 10h2v2H9z" fill="#f4e3d3"/></svg>
      <div class="fab">${icon(24, "0 0 24 24", svg`<path d="M20.400 4.900 19 3.500a1.990 1.990 0 0 0-2.800 0L3 16.800V21h4.200L20.400 7.700a2 2 0 0 0 0-2.800zM6.400 19H5v-1.400L14.600 8 16 9.400z" fill="#75009b"/>`)}${fit("Request edit access", 135.500)}</div>
    </div>
    <div class="bar">${icon(7, "0 0 7 4", svg`<path d="M0 4 3.500 0 7 4z" fill="#a3a3a3"/>`, 4)}<div class="thumb"></div>
      <svg class="down" width="7" height="4" viewBox="0 0 7 4"><path d="M0 0h7L3.500 4z" fill="#505050"/></svg></div></div>`;
  }
}
